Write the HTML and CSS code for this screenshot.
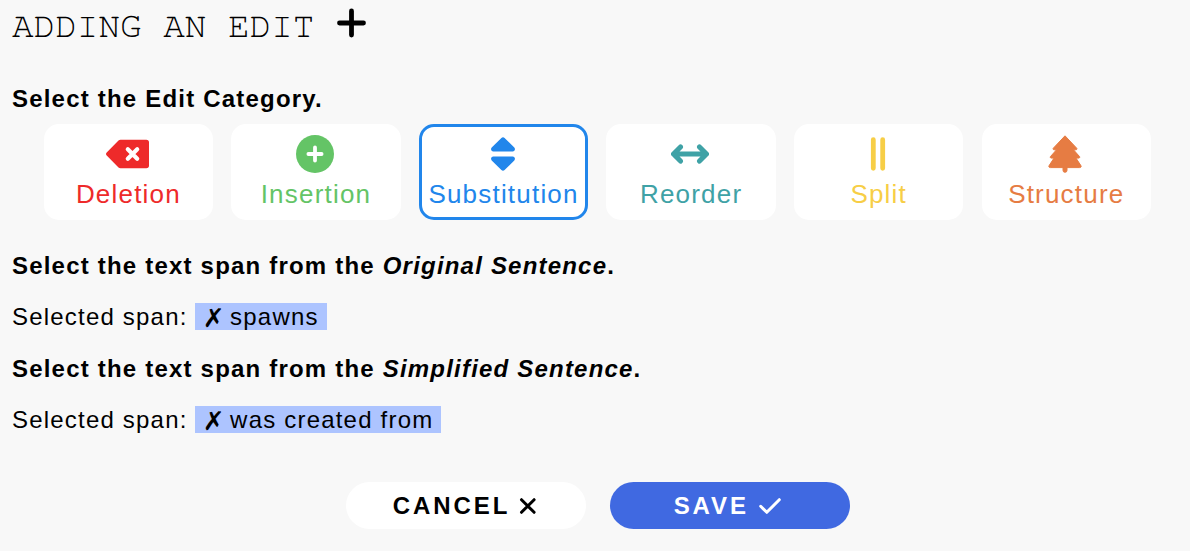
FILE: index.html
```html
<!DOCTYPE html>
<html lang="en">
<head>
<meta charset="utf-8">
<title>Adding an edit</title>
<link rel="stylesheet" href="styles.css">
</head>
<body>
<main class="editor">
  <h1 class="title"><span>ADDING AN EDIT</span>
    <svg class="title-icon" width="30" height="30" viewBox="0 0 30 30"><path d="M15.500 3v24M3.500 15h24" stroke="currentColor" stroke-width="4.800" stroke-linecap="round"/></svg>
  </h1>
  <p class="prompt">Select the Edit Category.</p>
  <div class="categories">
    <button class="category deletion">
      <svg class="icon" width="43" height="38" viewBox="0 0 43 38"><path d="M14.5 4.7H40.3a2.7 2.7 0 0 1 2.7 2.7V30.5a2.7 2.7 0 0 1-2.7 2.7H14.5a3 3 0 0 1-2-.8L.7 20.5a2.2 2.2 0 0 1 0-3L12.5 5.5a3 3 0 0 1 2-.8z" fill="currentColor"/><path d="M21.8 14.300l9.400 9.400M31.200 14.300l-9.400 9.400" stroke="#fff" stroke-width="4.200" stroke-linecap="round"/></svg>
      <span>Deletion</span>
    </button>
    <button class="category insertion">
      <svg class="icon" width="38" height="38" viewBox="0 0 38 38"><circle cx="19" cy="19" r="19" fill="currentColor"/><path d="M19 12.4v13.2M12.4 19h13.2" stroke="#fff" stroke-width="3.8" stroke-linecap="round"/></svg>
      <span>Insertion</span>
    </button>
    <button class="category substitution selected">
      <svg class="icon" width="24" height="38" viewBox="0 0 24 38"><path d="M13.6 2.900l9.700 9.700c1.400 1.500.4 3.900-1.600 3.900H2.300c-2 0-3-2.400-1.600-3.900l9.700-9.700a2.300 2.300 0 0 1 3.200 0zM13.600 35.100l9.700-9.700c1.400-1.500.4-3.900-1.600-3.900H2.300c-2 0-3 2.400-1.600 3.900l9.700 9.700a2.300 2.300 0 0 0 3.200 0z" fill="currentColor"/></svg>
      <span>Substitution</span>
    </button>
    <button class="category reorder">
      <svg class="icon" width="38" height="38" viewBox="0 0 38 38"><path d="M2.6 19h32.8M9.5 11.9L2.5 19l7 7.1M28.5 11.9l7 7.1-7 7.1" fill="none" stroke="currentColor" stroke-width="5" stroke-linecap="round" stroke-linejoin="round"/></svg>
      <span>Reorder</span>
    </button>
    <button class="category split">
      <svg class="icon" width="16" height="38" viewBox="0 0 16 38"><path d="M3.3 4.7v28.6M12.7 4.7v28.6" stroke="currentColor" stroke-width="4.8" stroke-linecap="round"/></svg>
      <span>Split</span>
    </button>
    <button class="category structure">
      <svg class="icon" width="34" height="38" viewBox="0 0 34 38"><path d="M17 .8L28.500 13a1 1 0 0 1-.7 1.800H25.500l5.800 6.500a1 1 0 0 1-.8 1.800h-2.500l4.700 7.200a1.300 1.300 0 0 1-1 2.300H19v2.700a2 2 0 0 1-4 0v-2.700H2.300a1.300 1.300 0 0 1-1-2.300l4.700-7.200H3.500a1 1 0 0 1-.8-1.800l5.800-6.500H6.200A1 1 0 0 1 5.500 13z" fill="currentColor" stroke="currentColor" stroke-width="1" stroke-linejoin="round"/></svg>
      <span>Structure</span>
    </button>
  </div>
  <p class="prompt">Select the text span from the <em>Original Sentence</em>.</p>
  <p class="span-row">Selected span: <span class="chip"><span class="remove">✗</span> spawns</span></p>
  <p class="prompt">Select the text span from the <em>Simplified Sentence</em>.</p>
  <p class="span-row">Selected span: <span class="chip"><span class="remove">✗</span> was created from</span></p>
  <div class="actions">
    <button class="action cancel"><span>CANCEL</span>
      <svg width="17" height="16" viewBox="0 0 17 16"><path d="M2.500 1.700l12.600 12.600M15.100 1.700l-12.600 12.600" stroke="currentColor" stroke-width="3" stroke-linecap="round"/></svg>
    </button>
    <button class="action save"><span>SAVE</span>
      <svg width="22" height="16" viewBox="0 0 22 16"><path d="M1.700 8.300l6.100 6L20.300 1.700" fill="none" stroke="currentColor" stroke-width="3" stroke-linecap="round" stroke-linejoin="round"/></svg>
    </button>
  </div>
</main>
</body>
</html>
```
FILE: styles.css
```css
body {
  margin: 0;
  background: #f8f8f8;
  color: #000;
  font: 24px/27px "Liberation Sans", Arial, sans-serif;
  letter-spacing: 1.2px;
}
.editor { padding: 7px 12px 0; }
.title {
  display: flex;
  gap: 22px;
  height: 78px;
  margin: 0;
  font: 300 36px/38px "FreeMono", "Nimbus Mono PS", "Courier Prime", "Courier New", "Liberation Mono", monospace;
  letter-spacing: 0;
}
.title-icon { display: block; margin-top: 1px; }
.prompt, .span-row { margin: 0; }
.prompt { font-weight: bold; }
.categories {
  display: grid;
  grid-template-columns: repeat(6, 1fr);
  gap: 18.2px;
  margin: 12px 27px 32px 31.7px;
}
.category {
  display: flex;
  flex-direction: column;
  align-items: center;
  gap: 6px;
  box-sizing: border-box;
  height: 96px;
  padding: 8px 0 0;
  border: 3px solid #fff;
  border-radius: 15px;
  background: #fff;
  font: 26px/30px "Liberation Sans", Arial, sans-serif;
  letter-spacing: 1.2px;
}
.icon { margin-right: 1.6px; }
.deletion { color: #ee2a2a; }
.insertion { color: #64c466; }
.substitution { color: #2186eb; }
.reorder { color: #3fa2a6; }
.split { color: #f7ce46; }
.structure { color: #e67c43; }
.selected { border-color: #2186eb; }
.span-row { margin: 24px 0 25px; }
.chip {
  padding: 0 8px 0 9px;
  background: #adc4ff;
}
.remove {
  margin-left: -1.6px;
  font-family: "DejaVu Sans", sans-serif;
  font-size: 26px;
  line-height: 0;
  letter-spacing: -2.4px;
  vertical-align: -2px;
}
.actions {
  display: flex;
  justify-content: center;
  gap: 24px;
  margin: 49px 0 0 6px;
}
.action {
  display: flex;
  align-items: center;
  justify-content: center;
  gap: 8.5px;
  box-sizing: border-box;
  width: 240px;
  height: 47px;
  padding: 0 3.5px 0 0;
  border: 0;
  border-radius: 24px;
  background: #fff;
  color: #000;
  font: bold 24px/27px "Liberation Sans", Arial, sans-serif;
  letter-spacing: 2.9px;
}
.save { gap: 10.5px; padding-right: 5px; background: #4069e1; color: #fff; }
```
